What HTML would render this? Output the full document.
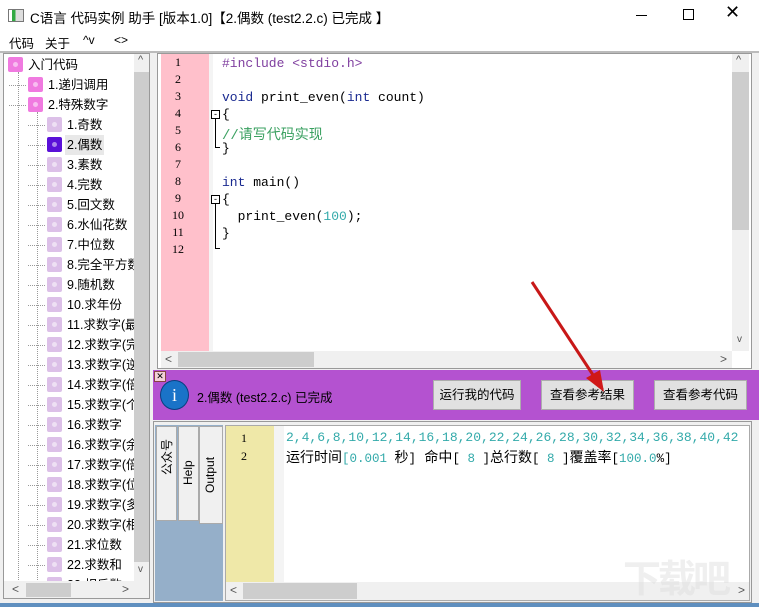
<!DOCTYPE html>
<html><head><meta charset="utf-8"><style>
*{margin:0;padding:0;box-sizing:border-box}
body{width:759px;height:607px;overflow:hidden;background:#f0f0f0;font-family:"Liberation Sans","Noto Sans CJK SC",sans-serif;font-size:12px;color:#000;position:relative}
.a{position:absolute}
.mono{font-family:"Liberation Mono","Noto Sans CJK SC",monospace;font-size:13px}
.ti{position:absolute;height:20px;line-height:20px;white-space:nowrap;font-size:12.5px}
.ic{position:absolute;width:15px;height:15px;border-radius:2px;top:2px}
.ic::after{content:"";position:absolute;left:5px;top:5px;width:5px;height:5px;border-radius:50%;background:rgba(255,255,255,.5)}
.btn{position:absolute;top:380px;height:30px;border:1px solid #adadad;background:#e1e1e1;line-height:28px;text-align:center;font-size:12.5px}
.ln{position:absolute;width:40px;text-align:center;font-family:"Liberation Serif",serif;font-size:12px}
</style></head><body>
<div class="a" style="left:0;top:0;width:759px;height:32px;background:#fff"></div>
<div class="a" style="left:8px;top:9px;width:16px;height:13px;border:1px solid #777;background:linear-gradient(90deg,#fff 20%,#3a4 20%,#3a4 45%,#ddd 45%)"></div>
<div class="a" style="left:30px;top:7px;font-size:13.5px">C语言 代码实例 助手 [版本1.0]【2.偶数 (test2.2.c) 已完成 】</div>
<div class="a" style="left:636px;top:15px;width:11px;height:1px;background:#000"></div>
<div class="a" style="left:683px;top:9px;width:11px;height:11px;border:1px solid #000"></div>
<div class="a" style="left:725px;top:2px;font-size:18px;font-weight:100">✕</div>
<div class="a" style="left:0;top:32px;width:759px;height:20px;background:#fff"></div>
<div class="a" style="left:9px;top:33px;font-size:12.5px">代码</div>
<div class="a" style="left:45px;top:33px;font-size:12.5px">关于</div>
<div class="a" style="left:83px;top:33px">^v</div>
<div class="a" style="left:114px;top:33px">&lt;&gt;</div>
<div class="a" style="left:0;top:51px;width:759px;height:2px;background:#bbb"></div>
<!-- tree -->
<div class="a" style="left:3px;top:53px;width:147px;height:546px;background:#fff;border:1px solid #999;overflow:hidden">
<div class="a" style="left:14px;top:18px;height:530px;border-left:1px dotted #999"></div>
<div class="a" style="left:33px;top:58px;height:490px;border-left:1px dotted #999"></div>
<div id="t"></div>
<div class="a" style="left:130px;top:0;width:16px;height:527px;background:#f0f0f0"></div>
<div class="a" style="left:130px;top:18px;width:16px;height:490px;background:#cdcdcd"></div>
<div class="a" style="left:134px;top:0;font-size:11px;color:#555">^</div>
<div class="a" style="left:134px;top:510px;font-size:10px;color:#555">v</div>
<div class="a" style="left:0;top:527px;width:146px;height:18px;background:#f0f0f0"></div>
<div class="a" style="left:22px;top:529px;width:45px;height:14px;background:#cdcdcd"></div>
<div class="a" style="left:8px;top:528px;color:#555">&lt;</div>
<div class="a" style="left:118px;top:528px;color:#555">&gt;</div>
</div>
<!-- editor -->
<div class="a" style="left:157px;top:53px;width:595px;height:316px;background:#fff;border:1px solid #999"></div>
<div class="a" style="left:161px;top:54px;width:48px;height:297px;background:#ffc0cb"></div>
<div class="a" style="left:209px;top:54px;width:4px;height:297px;background:#f4f4f4"></div>
<div id="ed"></div>
<div class="a" style="left:732px;top:54px;width:17px;height:297px;background:#f0f0f0"></div>
<div class="a" style="left:732px;top:72px;width:17px;height:158px;background:#cdcdcd"></div>
<div class="a" style="left:736px;top:54px;font-size:11px;color:#555">^</div>
<div class="a" style="left:737px;top:334px;font-size:10px;color:#555">v</div>
<div class="a" style="left:161px;top:351px;width:571px;height:17px;background:#f0f0f0"></div>
<div class="a" style="left:178px;top:352px;width:136px;height:15px;background:#cdcdcd"></div>
<div class="a" style="left:165px;top:352px;color:#555">&lt;</div>
<div class="a" style="left:720px;top:352px;color:#555">&gt;</div>
<!-- purple bar -->
<div class="a" style="left:153px;top:370px;width:606px;height:50px;background:#b452d0"></div>
<div class="a" style="left:154px;top:371px;width:12px;height:11px;background:#f4d0d8;border:1px solid #844;font-size:9px;line-height:9px;text-align:center">✕</div>
<div class="a" style="left:160px;top:380px;width:29px;height:30px;border-radius:50%;background:#1a73c8;border:1px solid #0a3f80;color:#fff;text-align:center;line-height:28px;font-size:18px;font-family:'Liberation Serif',serif">i</div>
<div class="a" style="left:197px;top:387px;font-size:12.5px">2.偶数 (test2.2.c) 已完成</div>
<div class="btn" style="left:433px;width:88px">运行我的代码</div>
<div class="btn" style="left:541px;width:93px">查看参考结果</div>
<div class="btn" style="left:654px;width:93px">查看参考代码</div>
<svg class="a" style="left:0;top:0" width="759" height="607"><line x1="532" y1="282" x2="595" y2="378" stroke="#c81818" stroke-width="3"/><polygon points="604,392 586,378 600,370" fill="#d01818"/></svg>
<!-- bottom -->
<div class="a" style="left:153px;top:421px;width:599px;height:182px;background:#f0f0f0;border:1px solid #999"></div>
<div class="a" style="left:155px;top:425px;width:68px;height:176px;background:#95afc9"></div>
<div class="a" style="left:156px;top:426px;width:21px;height:95px;background:#f0f0f0;border:1px solid #aaa"></div>
<div class="a" style="left:178px;top:426px;width:21px;height:95px;background:#f0f0f0;border:1px solid #aaa"></div>
<div class="a" style="left:199px;top:426px;width:24px;height:98px;background:#f0f0f0;border:1px solid #aaa"></div>
<div class="a" style="left:158px;top:475px;transform:rotate(-90deg);transform-origin:0 0;font-size:12px">公众号</div>
<div class="a" style="left:181px;top:485px;transform:rotate(-90deg);transform-origin:0 0;font-size:12px">Help</div>
<div class="a" style="left:203px;top:493px;transform:rotate(-90deg);transform-origin:0 0;font-size:12px">Output</div>
<div class="a" style="left:225px;top:425px;width:525px;height:176px;background:#fff;border:1px solid #aaa"></div>
<div class="a" style="left:226px;top:426px;width:48px;height:156px;background:#efe8a8"></div>
<div class="a" style="left:274px;top:426px;width:10px;height:156px;background:#f4f4f4"></div>
<div class="ln" style="left:224px;top:431px">1</div>
<div class="ln" style="left:224px;top:449px">2</div>
<div class="a mono" style="left:286px;top:430px;color:#3aa;white-space:nowrap">2,4,6,8,10,12,14,16,18,20,22,24,26,28,30,32,34,36,38,40,42</div>
<div class="a mono" style="left:286px;top:447px;white-space:nowrap;font-size:14px">运行时间<span style="color:#3aa;font-size:12.5px">[0.001 </span>秒<span style="font-size:12.5px">]</span> 命中<span style="font-size:12.5px">[ <span style="color:#3aa">8</span> ]</span>总行数<span style="font-size:12.5px">[ <span style="color:#3aa">8</span> ]</span>覆盖率<span style="font-size:12.5px">[<span style="color:#3aa">100.0</span>%]</span></div>
<div class="a" style="left:226px;top:582px;width:523px;height:18px;background:#f0f0f0"></div>
<div class="a" style="left:243px;top:583px;width:114px;height:16px;background:#cdcdcd"></div>
<div class="a" style="left:230px;top:583px;color:#555">&lt;</div>
<div class="a" style="left:738px;top:583px;color:#555">&gt;</div>
<div class="a" style="left:0;top:603px;width:759px;height:4px;background:#5f8fbf"></div>
<div class="a" style="left:623px;top:548px;font-size:38px;color:rgba(220,220,220,.45);font-weight:bold;letter-spacing:-3px">下载吧</div>
<script>
var it=[[0,"入门代码"],[1,"1.递归调用"],[1,"2.特殊数字"],[2,"1.奇数"],[2,"2.偶数",1],[2,"3.素数"],[2,"4.完数"],[2,"5.回文数"],[2,"6.水仙花数"],[2,"7.中位数"],[2,"8.完全平方数"],[2,"9.随机数"],[2,"10.求年份"],[2,"11.求数字(最"],[2,"12.求数字(完"],[2,"13.求数字(逆"],[2,"14.求数字(倍"],[2,"15.求数字(个"],[2,"16.求数字"],[2,"16.求数字(余"],[2,"17.求数字(倍"],[2,"18.求数字(位"],[2,"19.求数字(多"],[2,"20.求数字(相"],[2,"21.求位数"],[2,"22.求数和"],[2,"23.相反数"]];
var h="";it.forEach(function(e,i){var y=1+i*20,x=[4,24,43][e[0]];var c=e[0]<2?"#f07ae0":(e[2]?"#5a10d8":"#dcc0e8");
if(e[0]>0)h+='<div class="a" style="left:'+(x-19)+'px;top:'+(y+10)+'px;width:17px;border-top:1px dotted #999"></div>';
h+='<div class="ic" style="left:'+x+'px;top:'+(y+2)+'px;background:'+c+'"></div><div class="ti" style="left:'+(x+20)+'px;top:'+y+'px;'+(e[2]?'background:#e8e8e8;padding:0 2px;margin-left:-2px':'')+'">'+e[1]+'</div>'});
document.getElementById("t").innerHTML=h;
var L=[['<span style="color:#8040a0">#include &lt;stdio.h&gt;</span>'],[''],['<span style="color:#1a2a90">void</span> print_even(<span style="color:#1a2a90">int</span> count)'],['{'],['<span style="color:#3aa060;font-size:14px">//请写代码实现</span>'],['}'],[''],['<span style="color:#1a2a90">int</span> main()'],['{'],['  print_even(<span style="color:#3aa">100</span>);'],['}'],['']];
var g="";L.forEach(function(l,i){var y=55+i*17;g+='<div class="ln" style="left:158px;top:'+y+'px">'+(i+1)+'</div><div class="a mono" style="left:222px;top:'+(y+1)+'px;white-space:pre">'+l[0]+'</div>'});
g+='<div class="a" style="left:211px;top:110px;width:9px;height:9px;border:1px solid #000;background:#fff;font-size:9px;line-height:6px;text-align:center">-</div><div class="a" style="left:215px;top:119px;width:5px;height:29px;border-left:1px solid #000;border-bottom:1px solid #000"></div>';
g+='<div class="a" style="left:211px;top:195px;width:9px;height:9px;border:1px solid #000;background:#fff;font-size:9px;line-height:6px;text-align:center">-</div><div class="a" style="left:215px;top:204px;width:5px;height:45px;border-left:1px solid #000;border-bottom:1px solid #000"></div>';
document.getElementById("ed").innerHTML=g;
</script>
</body></html>
